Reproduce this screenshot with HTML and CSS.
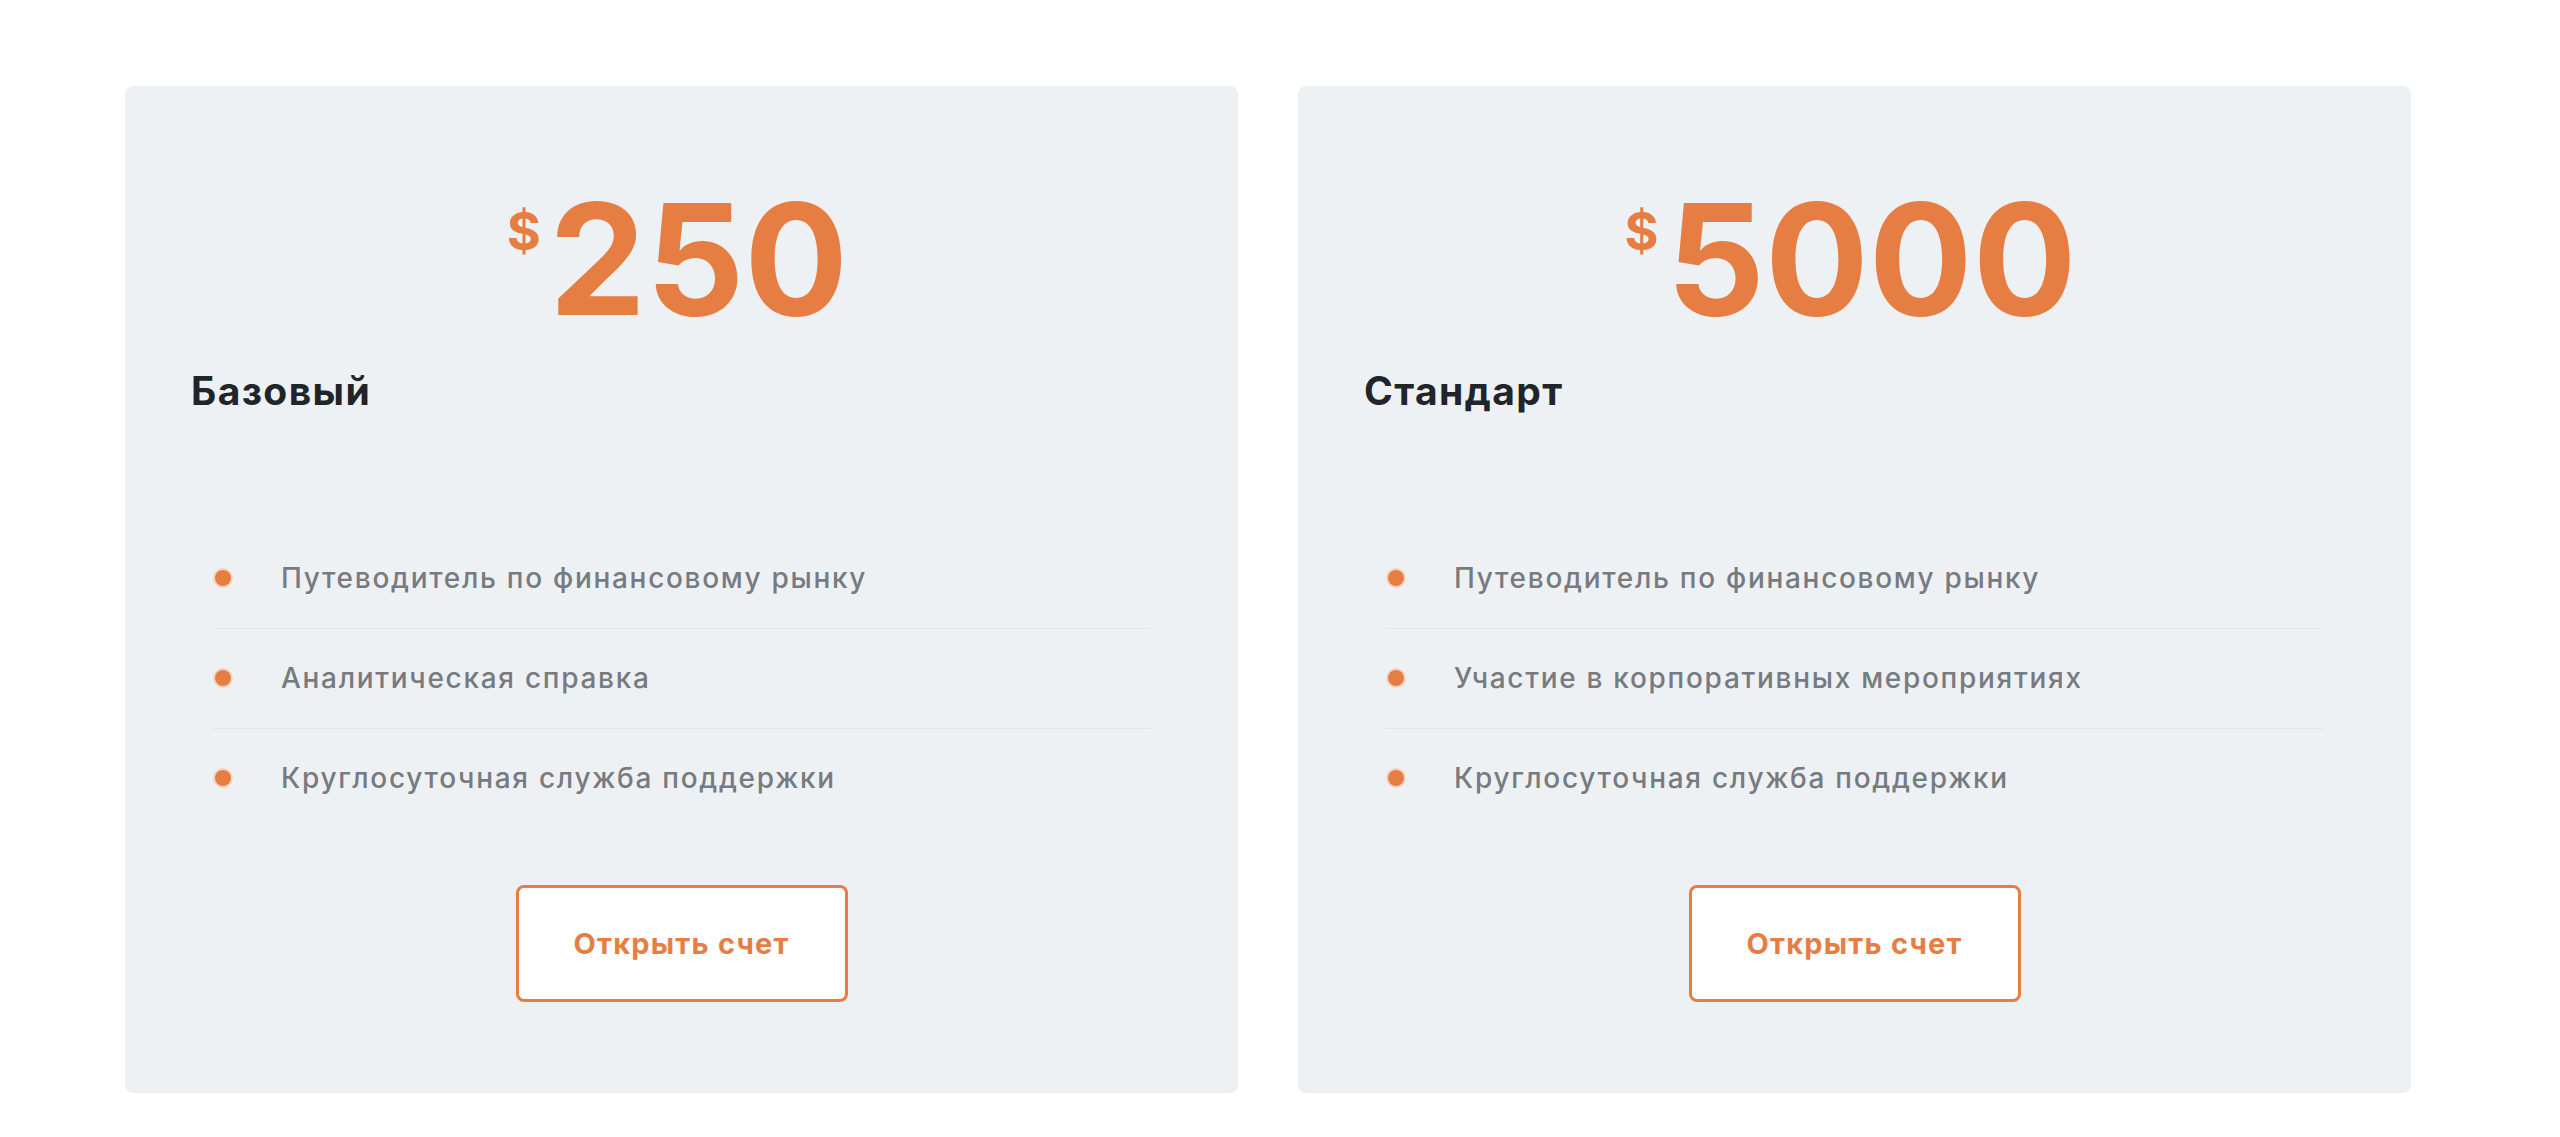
FILE: index.html
```html
<!DOCTYPE html>
<html lang="ru">

<head>
    <meta charset="UTF-8">
    <meta name="viewport" content="width=device-width, initial-scale=1.0">
    <title>Тарифы</title>
    <link rel="stylesheet" href="styles.css">
</head>

<body>
    <div class="plans">
        <!-- Basic plan -->
        <div class="plan">
            <div class="price">
                <span class="currency">$</span>
                <span class="amount">250</span>
            </div>
            <h3 class="plan-title">Базовый</h3>
            <ul class="features">
                <li><span class="dot"></span>Путеводитель по финансовому рынку</li>
                <li><span class="dot"></span>Аналитическая справка</li>
                <li><span class="dot"></span>Круглосуточная служба поддержки</li>
            </ul>
            <div class="plan-action">
                <a href="#" class="btn-open">Открыть счет</a>
            </div>
        </div>

        <!-- Standard plan -->
        <div class="plan">
            <div class="price">
                <span class="currency">$</span>
                <span class="amount">5000</span>
            </div>
            <h3 class="plan-title">Стандарт</h3>
            <ul class="features">
                <li><span class="dot"></span>Путеводитель по финансовому рынку</li>
                <li><span class="dot"></span>Участие в корпоративных мероприятиях</li>
                <li><span class="dot"></span>Круглосуточная служба поддержки</li>
            </ul>
            <div class="plan-action">
                <a href="#" class="btn-open">Открыть счет</a>
            </div>
        </div>
    </div>
</body>

</html>
```

FILE: styles.css
```css
/* General styles */
body {
    margin: 0;
    font-family: Inter, "Noto Sans", sans-serif;
    background-color: #fff;
}

.plans {
    display: flex;
    gap: 60px;
    padding: 86px 0 0 125px;
}

/* Plan card */
.plan {
    width: 1113px;
    height: 1007px;
    box-sizing: border-box;
    background: #eef1f4;
    border-radius: 8px;
    padding: 0 68px;
    display: flex;
    flex-direction: column;
}

.price {
    display: flex;
    justify-content: center;
    align-items: flex-start;
    color: #e67e43;
    font-weight: 700;
    margin-top: 96px;
    margin-right: 8px;
    line-height: 1;
}

.currency {
    font-size: 52px;
    margin-top: 24px;
    margin-right: 8px;
}

.amount {
    font-size: 154px;
    letter-spacing: 0;
}

.plan-title {
    margin: 32px 0 0 -2px;
    font-size: 39px;
    font-weight: 700;
    letter-spacing: 1.4px;
    color: #212529;
    line-height: 1.2;
}

/* Feature list */
.features {
    list-style: none;
    margin: 114px 20px 0;
    padding: 0;
}

.features li {
    display: flex;
    align-items: center;
    height: 99px;
    border-bottom: 1px solid #e0e4e8;
    font-size: 28px;
    font-weight: 500;
    letter-spacing: 1.7px;
    color: #777b80;
}

.features li:last-child {
    border-bottom: none;
}

.dot {
    width: 16px;
    height: 16px;
    border-radius: 50%;
    background: #e67e43;
    box-shadow: 0 0 0 2px #f6d5c0;
    margin: 0 50px 0 2px;
    flex-shrink: 0;
}

/* Button */
.plan-action {
    display: flex;
    justify-content: center;
    margin-top: 57px;
}

.btn-open {
    width: 332px;
    height: 117px;
    box-sizing: border-box;
    display: flex;
    align-items: center;
    justify-content: center;
    background: #fff;
    border: 3px solid #e67e43;
    border-radius: 8px;
    color: #e67e43;
    font-size: 29px;
    font-weight: 700;
    letter-spacing: 1.2px;
    text-decoration: none;
}
```
